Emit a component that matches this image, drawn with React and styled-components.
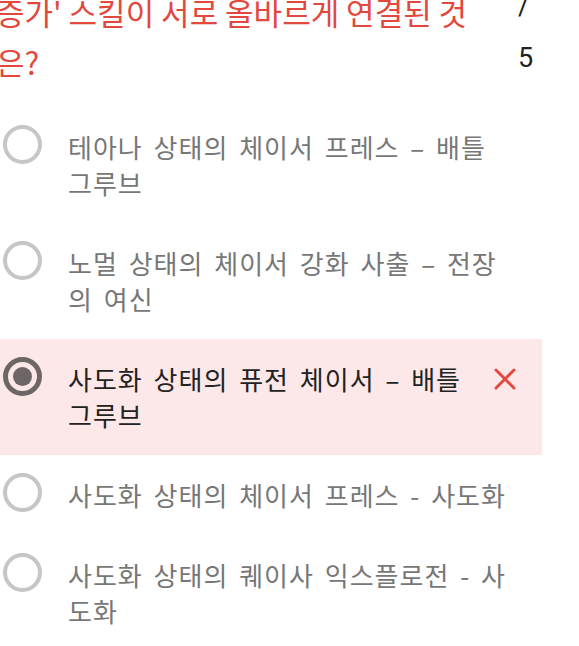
import styled, { createGlobalStyle } from "styled-components";

const GlobalStyle = createGlobalStyle`
  html, body {
    margin: 0;
    padding: 0;
    background: #ffffff;
    overflow: hidden;
  }
  body {
    font-family: "Noto Sans CJK KR", "Noto Sans", sans-serif;
  }
`;

const Page = styled.div`
  width: 579px;
  height: 646px;
  overflow: hidden;
`;

const Header = styled.div`
  display: flex;
  align-items: flex-start;
  width: 546px;
  margin: -13px 0 20px -4px;
`;

const Question = styled.h2`
  flex: 1;
  margin: 0 42px 0 0;
  font-size: 31px;
  font-weight: 400;
  line-height: 50px;
  color: #e2483d;
`;

const Counter = styled.div`
  width: 24px;
  margin-top: -7px;
  font-family: Roboto, "Liberation Sans", sans-serif;
  font-size: 27px;
  line-height: 52px;
  color: #222222;
`;

const List = styled.div`
  width: 542px;
  display: flex;
  flex-direction: column;
`;

const Row = styled.div`
  display: flex;
  align-items: flex-start;
  padding: 22px 22px 22px 3px;
  background: ${(p) => (p.$wrong ? "#fce8e8" : "transparent")};
`;

const Radio = styled.span`
  flex: none;
  width: 39px;
  height: 39px;
  margin: -4px 26px 0 0;
  box-sizing: border-box;
  border-radius: 50%;
  border: ${(p) => (p.$checked ? "5px solid #6c6666" : "4px solid #c6c6c6")};
  display: flex;
  align-items: center;
  justify-content: center;

  &::after {
    content: "";
    display: ${(p) => (p.$checked ? "block" : "none")};
    width: 19px;
    height: 19px;
    border-radius: 50%;
    background: #6c6666;
  }
`;

const Label = styled.div`
  flex: 1;
  margin-right: 9px;
  font-size: 26px;
  line-height: 36px;
  letter-spacing: 1px;
  word-spacing: 4px;
  color: ${(p) => (p.$checked ? "#222222" : "#777777")};
`;

const Mark = styled.span`
  flex: none;
  width: 30px;
  height: 36px;
  display: flex;
  align-items: center;
  justify-content: center;
`;

const options = [
  { text: "테아나 상태의 체이서 프레스 – 배틀 그루브" },
  { text: "노멀 상태의 체이서 강화 사출 – 전장의 여신" },
  { text: "사도화 상태의 퓨전 체이서 – 배틀 그루브", checked: true },
  { text: "사도화 상태의 체이서 프레스 - 사도화" },
  { text: "사도화 상태의 퀘이사 익스플로전 - 사도화" },
];

const App = () => {
  return (
    <Page>
      <GlobalStyle />
      <Header>
        <Question>증가' 스킬이 서로 올바르게 연결된 것은?</Question>
        <Counter>/ 5</Counter>
      </Header>
      <List>
        {options.map((o) => (
          <Row key={o.text} $wrong={o.checked}>
            <Radio $checked={o.checked} />
            <Label $checked={o.checked}>{o.text}</Label>
            {o.checked && (
              <Mark>
                <svg width="24" height="24" viewBox="0 0 24 24">
                  <path
                    d="M3 3 L21 21 M21 3 L3 21"
                    stroke="#e2483d"
                    strokeWidth="3"
                    strokeLinecap="round"
                    fill="none"
                  />
                </svg>
              </Mark>
            )}
          </Row>
        ))}
      </List>
    </Page>
  );
};

export default App;
